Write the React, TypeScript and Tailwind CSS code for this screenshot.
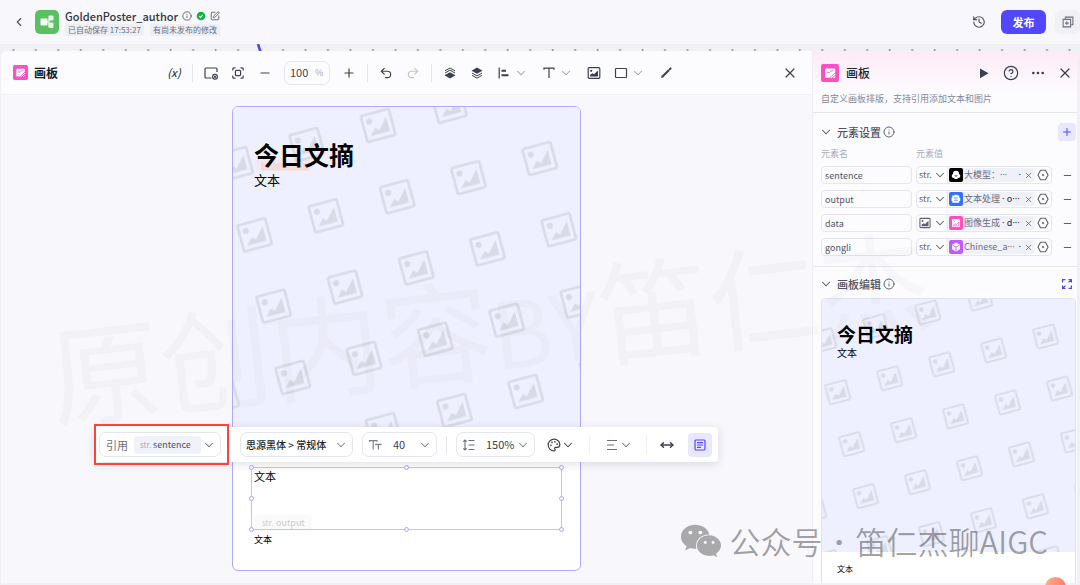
import React from "react";
import {
  ChevronDown,
  ChevronLeft,
  CircleHelp,
  Ellipsis,
  History,
  Info,
  Minus,
  MoveHorizontal,
  Palette,
  Plus,
  Redo2,
  SquarePen,
  Undo2,
  X,
} from "lucide-react";
import { FaWeixin } from "react-icons/fa";

type IconProps = { className?: string };

function FlowLogo({ className }: IconProps) {
  return (
    <svg viewBox="0 0 24 24" className={className} aria-hidden="true">
      <rect width="24" height="24" rx="5" fill="#5bc160" />
      <path d="M10 12h4V8.5h2M14 12v4h2" fill="none" stroke="#fff" strokeOpacity=".75" strokeWidth="1.4" />
      <rect x="5.5" y="8.5" width="7" height="7" rx="1.2" fill="#fff" />
      <rect x="13.5" y="5.5" width="5" height="5" rx="1" fill="#e3f5e4" />
      <rect x="13.5" y="12.5" width="5" height="5.5" rx="1" fill="#e3f5e4" />
    </svg>
  );
}

function BoardLogo({ className }: IconProps) {
  return (
    <svg viewBox="0 0 18 18" className={className} aria-hidden="true">
      <rect width="18" height="18" rx="2" fill="#ff4fc3" />
      <path d="M5 4.5h8.2a1 1 0 0 1 1 1v2.7L8.6 13.8H5a1 1 0 0 1-1-1V5.5a1 1 0 0 1 1-1z" fill="#fff" />
      <path d="M5.5 9.2c1.6-2.6 2.4.6 3.8-1.2.9-1.2 1.6-1.6 2.8-1" fill="none" stroke="#ff4fc3" strokeWidth="1" />
      <path d="M10 14l4.2-4.2M12.6 14l1.6-1.6" stroke="#fff" strokeWidth="1.2" />
    </svg>
  );
}

function PictureIcon({ className }: IconProps) {
  return (
    <svg viewBox="0 0 16 16" className={className} aria-hidden="true">
      <rect x="2.2" y="2.7" width="11.6" height="10.6" rx="1" fill="none" stroke="currentColor" strokeWidth="1.2" />
      <circle cx="5.2" cy="5.8" r="1.1" fill="currentColor" />
      <path d="M4 11.6V10l2.4-1.8 1.6 1L12 5.4v6.2z" fill="currentColor" />
    </svg>
  );
}

function SizeIcon({ className }: IconProps) {
  return (
    <svg viewBox="0 0 16 16" className={className} fill="none" stroke="currentColor" strokeWidth="1.2" aria-hidden="true">
      <path d="M8.5 13H3a1 1 0 0 1-1-1V4a1 1 0 0 1 1-1h10a1 1 0 0 1 1 1v3" />
      <circle cx="12" cy="11.8" r="2.4" />
      <circle cx="12" cy="11.8" r=".5" fill="currentColor" />
    </svg>
  );
}

function FitIcon({ className }: IconProps) {
  return (
    <svg viewBox="0 0 16 16" className={className} fill="none" stroke="currentColor" strokeWidth="1.2" aria-hidden="true">
      <path d="M5.5 2.8H3.8a1 1 0 0 0-1 1v1.7M10.5 2.8h1.7a1 1 0 0 1 1 1v1.7M5.5 13.2H3.8a1 1 0 0 1-1-1v-1.7M10.5 13.2h1.7a1 1 0 0 0 1-1v-1.7" />
      <rect x="5.4" y="5.4" width="5.2" height="5.2" rx="1" />
    </svg>
  );
}

function LayersIcon({ className, filled }: IconProps & { filled: "top" | "bottom" }) {
  return filled === "bottom" ? (
    <svg viewBox="0 0 16 16" className={className} aria-hidden="true">
      <path d="M3 5.8L8 3l5 2.8M3 8L8 5.2 13 8" fill="none" stroke="currentColor" strokeWidth="1" />
      <path d="M2.5 10.3L8 7.2l5.5 3.1L8 13.6z" fill="currentColor" />
    </svg>
  ) : (
    <svg viewBox="0 0 16 16" className={className} aria-hidden="true">
      <path d="M2.5 5.7L8 2.4l5.5 3.3L8 8.8z" fill="currentColor" />
      <path d="M3 8l5 2.9L13 8M3 10.3l5 2.9 5-2.9" fill="none" stroke="currentColor" strokeWidth="1" />
    </svg>
  );
}

function AlignEdgeIcon({ className }: IconProps) {
  return (
    <svg viewBox="0 0 16 16" className={className} aria-hidden="true">
      <path d="M3.2 2.5v11" stroke="currentColor" strokeWidth="1.2" />
      <path d="M5.5 5.8h4.500M5.5 10.2h7" stroke="currentColor" strokeWidth="2" />
    </svg>
  );
}

function TextIcon({ className }: IconProps) {
  return (
    <svg viewBox="0 0 16 16" className={className} fill="none" stroke="currentColor" strokeWidth="1.2" aria-hidden="true">
      <path d="M3 4.8V3.2h10v1.6M8 3.2V13" />
    </svg>
  );
}

function PenIcon({ className }: IconProps) {
  return (
    <svg viewBox="0 0 16 16" className={className} aria-hidden="true">
      <path d="M4.3 11.7L11 5" stroke="currentColor" strokeWidth="2" />
      <path d="M3 13l.8-2.4 1.6 1.6z" fill="currentColor" />
      <path d="M11.8 4.2l.8-.8" stroke="currentColor" strokeWidth="2" strokeLinecap="round" />
    </svg>
  );
}

function FontSizeIcon({ className }: IconProps) {
  return (
    <svg viewBox="0 0 16 16" className={className} fill="none" stroke="currentColor" strokeWidth="1.2" aria-hidden="true">
      <path d="M2.5 4.8V3.6H10v1.2M6.2 3.6v9M8.8 8.2v-.8H14v.8M11.4 7.4v5.2" />
    </svg>
  );
}

function LineHeightIcon({ className }: IconProps) {
  return (
    <svg viewBox="0 0 16 16" className={className} fill="none" stroke="currentColor" strokeWidth="1.1" aria-hidden="true">
      <path d="M4 3v10M2.300 4.700L4 3l1.700 1.700M2.300 11.300L4 13l1.700-1.700M7.500 3.500h6M7.500 8h6M7.500 12.500h6" />
    </svg>
  );
}

function HexIcon({ className }: IconProps) {
  return (
    <svg viewBox="0 0 16 16" className={className} fill="none" stroke="currentColor" strokeWidth="1.3" aria-hidden="true">
      <path d="M5.200 2.600h5.600L13.800 8l-3 5.400H5.200L2.200 8z" strokeLinejoin="round" />
      <circle cx="8" cy="8" r="1.200" fill="currentColor" stroke="none" />
    </svg>
  );
}

function ExpandIcon({ className }: IconProps) {
  return (
    <svg viewBox="0 0 12 12" className={className} fill="none" stroke="currentColor" strokeWidth="1.200" aria-hidden="true">
      <path d="M4.500 1.600H1.600v2.900M7.500 1.600h2.900v2.900M4.500 10.400H1.600V7.500M7.500 10.400h2.900V7.500M10.200 1.800L7.600 4.400M1.800 10.200l2.600-2.600" />
    </svg>
  );
}

function Chevron({ className = "" }: IconProps) {
  return <ChevronDown strokeWidth={1.8} className={`size-[14px] shrink-0 ${className}`} />;
}

/* Repeating tilted picture glyphs that stand in for an image still to be bound. */
function ImagePlaceholder({ id }: { id: string }) {
  return (
    <svg viewBox="0 0 348 348" className="block w-full bg-[#eff0ff]" role="img" aria-label="图片">
      <defs>
        <pattern id={id} width="74" height="74" patternUnits="userSpaceOnUse" patternTransform="translate(145.5 18.5) rotate(-15) translate(-37 -37)">
          <g transform="translate(37 37)">
            <rect x="-14.5" y="-13.5" width="29" height="27" rx="1.500" fill="none" stroke="#d8dae6" strokeWidth="2.600" />
            <circle cx="-7.700" cy="-6.200" r="3.100" fill="#d8dae6" />
            <path d="M-10 8.500L-3.500 1.500 0 5 10-6.500v15z" fill="#d8dae6" />
          </g>
        </pattern>
      </defs>
      <rect width="348" height="348" fill={`url(#${id})`} />
    </svg>
  );
}

function IconButton({ label, className = "", children }: { label: string; className?: string; children: React.ReactNode }) {
  return (
    <button type="button" aria-label={label} className={`flex shrink-0 items-center justify-center ${className}`}>
      {children}
    </button>
  );
}

function MenuButton({ label, children }: { label: string; children: React.ReactNode }) {
  return (
    <button type="button" aria-label={label} aria-haspopup="menu" className="mr-[2px] flex shrink-0 items-center gap-[2px]">
      {children}
      <Chevron className="text-[#9a9cab]" />
    </button>
  );
}

function Header() {
  return (
    <header className="flex h-11 shrink-0 items-center overflow-hidden bg-[#f7f7fc]">
      <IconButton label="返回" className="ml-3 size-[14px] text-[#50535f]">
        <ChevronLeft className="size-[14px]" />
      </IconButton>
      <FlowLogo className="ml-[9px] size-6 shrink-0" />
      <div className="ml-[6px] flex flex-col gap-px">
        <div className="flex h-[14px] items-center gap-1">
          <h1 className="text-[11px] leading-[14px] font-medium text-[#33353f]">GoldenPoster_author</h1>
          <Info className="size-[10px] text-[#50535f]" />
          <svg viewBox="0 0 10 10" className="size-[10px]" aria-label="已发布">
            <circle cx="5" cy="5" r="4.300" fill="#0eb544" />
            <path d="M3.200 5.100l1.300 1.300 2.400-2.500" fill="none" stroke="#fff" strokeWidth="1.100" />
          </svg>
          <SquarePen className="size-[10px] text-[#50535f]" />
        </div>
        <div className="flex gap-[6px] text-[8px] leading-3 text-[#6b6e7b]">
          <span className="rounded-xs bg-[#edeef6] px-[3px]">已自动保存 17:53:27</span>
          <span className="rounded-xs bg-[#edeef6] px-[3px]">有尚未发布的修改</span>
        </div>
      </div>
      <IconButton label="历史" className="ml-auto size-4 text-[#50535f]">
        <History className="size-[14px]" />
      </IconButton>
      <button type="button" className="ml-[14px] h-6 w-[45px] rounded-md bg-[#5147ff] text-[11px] leading-4 font-bold text-white">
        发布
      </button>
      <IconButton label="创建副本" className="ml-[9px] h-6 w-[25px] rounded-md bg-[#f0f0f5] text-[#6b6e7b]">
        <svg viewBox="0 0 16 16" className="size-3" fill="none" stroke="currentColor" strokeWidth="1.400" aria-hidden="true">
          <path d="M4.500 3.500v-2h10v10h-2M1.500 4.500h10v10h-10zM6.500 7v5M4 9.500h5" />
        </svg>
      </IconButton>
    </header>
  );
}

function DottedStrip() {
  return (
    <div className="h-[7px] shrink-0 bg-[#f1f1f5]">
      <svg className="block h-full w-full" aria-hidden="true">
        <defs>
          <pattern id="dots" width="22.470" height="8" patternUnits="userSpaceOnUse" patternTransform="translate(2 0)">
            <circle cx="11.400" cy="6" r="1" fill="#8b8d98" />
          </pattern>
        </defs>
        <rect width="100%" height="100%" fill="url(#dots)" />
        <path d="M258 0l2.500 8" stroke="#4d48f0" strokeWidth="2.600" />
      </svg>
    </div>
  );
}

function Divider() {
  return <span className="mx-[10px] h-[18px] w-px shrink-0 bg-[#e4e5ef]" />;
}

function CanvasToolbar() {
  return (
    <div className="flex h-[44px] shrink-0 items-center border-b border-[#f0f0f6] bg-[#fcfcff] pr-[14px] pl-3 text-[#3c3f4d]">
      <BoardLogo className="size-[15px] shrink-0" />
      <h2 className="ml-[6px] w-[132px] text-[12px] font-bold text-[#15171e]">画板</h2>
      <button type="button" aria-label="变量" className="w-4 text-center text-[11px] font-medium italic">
        <span className="-mx-1">(x)</span>
      </button>
      <Divider />
      <div className="flex items-center gap-[11px]">
        <IconButton label="画布尺寸"><SizeIcon className="size-4" /></IconButton>
        <IconButton label="适应画布"><FitIcon className="size-4" /></IconButton>
        <IconButton label="缩小" className="size-4"><Minus className="size-[14px]" /></IconButton>
        <label className="flex h-6 w-[46px] items-center rounded-[7px] border border-[#e4e5ef] px-[5px] text-[11px]">
          <input aria-label="缩放比例" defaultValue="100" className="w-6 min-w-0 bg-transparent outline-none" />
          <span className="ml-px text-[9px] text-[#a9abb8]">%</span>
        </label>
        <IconButton label="放大" className="size-4"><Plus className="size-[14px]" /></IconButton>
      </div>
      <Divider />
      <div className="flex items-center gap-[11px]">
        <IconButton label="撤销" className="size-4"><Undo2 className="size-[14px]" /></IconButton>
        <IconButton label="重做" className="size-4 text-[#c3c5d0]"><Redo2 className="size-[14px]" /></IconButton>
      </div>
      <Divider />
      <div className="flex items-center gap-[11px]">
        <IconButton label="置底"><LayersIcon filled="bottom" className="size-4" /></IconButton>
        <IconButton label="置顶"><LayersIcon filled="top" className="size-4" /></IconButton>
        <MenuButton label="对齐"><AlignEdgeIcon className="size-4" /></MenuButton>
        <MenuButton label="文本"><TextIcon className="size-4" /></MenuButton>
        <IconButton label="图片"><PictureIcon className="size-4" /></IconButton>
        <MenuButton label="形状">
          <svg viewBox="0 0 16 16" className="size-4" aria-hidden="true">
            <rect x="2.500" y="3.500" width="11" height="9" rx=".8" fill="none" stroke="currentColor" strokeWidth="1.200" />
          </svg>
        </MenuButton>
        <IconButton label="画笔"><PenIcon className="size-4" /></IconButton>
      </div>
      <IconButton label="关闭" className="ml-auto size-4"><X strokeWidth={1.800} className="size-4" /></IconButton>
    </div>
  );
}

function FormatSelect({ label, value, icon, className, textClass }: { label: string; value: string; icon?: React.ReactNode; className: string; textClass: string }) {
  return (
    <label className={`relative flex h-[25px] shrink-0 items-center rounded-[7px] border border-[#e4e5ef] ${className}`}>
      {icon}
      <select aria-label={label} defaultValue={value} className={`h-full w-full appearance-none bg-transparent outline-none ${textClass}`}>
        <option>{value}</option>
      </select>
      <Chevron className="pointer-events-none absolute right-1 text-[#7b7e8c]" />
    </label>
  );
}

function TextToolbar() {
  return (
    <div className="absolute top-[321px] left-[-137px] z-10 flex h-[35px] w-[623px] items-center rounded-sm bg-white pr-[6px] pl-1 text-[#3c3f4d] shadow-[0_2px_10px_rgba(30,30,60,0.14)]">
      <div className="relative flex h-[25px] w-[122px] shrink-0 items-center rounded-[7px] border border-[#e4e5ef] pl-[6px] text-[#6b6e7b]">
        <label htmlFor="reference" className="text-[11px] leading-4">引用</label>
        <span className="ml-[6px] flex h-[18px] w-[67px] items-center rounded-sm bg-[#f1f2f9] pl-[6px]">
          <span className="w-[13px] text-[8px] leading-3 text-[#a9abb8]">str.</span>
          <select id="reference" defaultValue="sentence" className="w-11 appearance-none bg-transparent text-[9px] leading-3 text-[#50535f] outline-none">
            <option>sentence</option>
          </select>
        </span>
        <Chevron className="pointer-events-none absolute right-1" />
      </div>
      <span className="ml-2 h-[18px] w-px bg-[#f0f0f6]" />
      <FormatSelect label="字体" value="思源黑体 > 常规体" className="ml-[10px] w-[113px]" textClass="pl-[5px] text-[10px] font-medium text-[#22242d]" />
      <FormatSelect label="字号" value="40" icon={<FontSizeIcon className="ml-1 size-4 shrink-0 text-[#7b7e8c]" />} className="ml-[9px] w-[75px]" textClass="pl-[10px] text-[11px]" />
      <span className="mx-[9px] h-[18px] w-px bg-[#e4e5ef]" />
      <FormatSelect label="行高" value="150%" icon={<LineHeightIcon className="ml-1 size-4 shrink-0 text-[#6b6e7b]" />} className="w-[79px]" textClass="pl-[9px] text-[11px]" />
      <button type="button" aria-label="颜色" className="ml-3 flex items-center">
        <Palette className="size-[14px]" />
        <Chevron />
      </button>
      <span className="ml-[14px] mr-4 h-[18px] w-px bg-[#f0f0f6]" />
      <button type="button" aria-label="文本对齐" className="flex items-center gap-px text-[#6b6e7b]">
        <svg viewBox="0 0 12 12" className="size-3" stroke="currentColor" strokeWidth="1.200" aria-hidden="true">
          <path d="M1 1.500h10M1 6h7M1 10.500h10" />
        </svg>
        <Chevron />
      </button>
      <span className="mx-[13px] h-[18px] w-px bg-[#f0f0f6]" />
      <IconButton label="宽度模式"><MoveHorizontal strokeWidth={2.500} className="size-[14px]" /></IconButton>
      <IconButton label="多行文本" className="ml-auto size-6 rounded-sm bg-[#e7e8ff] text-[#5147ff]">
        <svg viewBox="0 0 12 12" className="size-3" fill="none" stroke="currentColor" strokeWidth="1.200" aria-hidden="true">
          <rect x="1" y="1" width="10" height="10" rx="1" />
          <path d="M3 3.700h6M3 6h6M3 8.300h4" />
        </svg>
      </IconButton>
    </div>
  );
}

function SelectionFrame() {
  const dot = "size-[5px] rounded-full border border-[#a9a6ff] bg-white";
  return (
    <div className="absolute top-[359px] left-[17px] grid h-[67px] w-[315px] grid-cols-3 grid-rows-3 items-center justify-items-center">
      <div className="absolute inset-[2px] border border-[#c3c4f6]" />
      <i className={`relative self-start justify-self-start ${dot}`} />
      <i className={`relative self-start ${dot}`} />
      <i className={`relative self-start justify-self-end ${dot}`} />
      <i className={`relative col-start-1 justify-self-start ${dot}`} />
      <i className={`relative col-start-3 justify-self-end ${dot}`} />
      <i className={`relative col-start-1 self-end justify-self-start ${dot}`} />
      <i className={`relative self-end ${dot}`} />
      <i className={`relative self-end justify-self-end ${dot}`} />
    </div>
  );
}

function Stage() {
  return (
    <div className="flex min-h-0 flex-1 justify-center bg-[#f7f7fc] pt-[11px]">
      <div className="relative h-[465px] w-[349px] shrink-0">
        <div className="h-full overflow-hidden rounded-md border border-[#aeabff] bg-white">
          <ImagePlaceholder id="placeholder-main" />
        </div>
        <span className="absolute top-[53px] left-[23px] h-[11px] w-[58px] rounded-sm bg-[#ffb27a]/10" />
        <span className="absolute top-[57px] left-[29px] h-2 w-12 bg-[#ff9a4d]/15" />
        <p className="absolute top-[33px] left-[22px] text-[25px] leading-[30px] font-bold text-black">今日文摘</p>
        <p className="absolute top-[64px] left-[22px] text-[13px] leading-5 text-black">文本</p>
        <p className="absolute top-[361px] left-[22px] text-[11px] leading-[18px] text-black">文本</p>
        <p className="absolute top-[409px] left-[22px] flex h-4 w-[58px] items-center rounded-sm bg-[#fafafb] pl-2 text-[9px] leading-3 text-[#c9cad0]">
          <span className="w-[14px] text-[8px]">str.</span>output
        </p>
        <p className="absolute top-[426px] left-[22px] text-[9px] leading-4 text-black">文本</p>
        <SelectionFrame />
        <TextToolbar />
        <div className="pointer-events-none absolute top-[318px] left-[-138px] z-20 h-[41px] w-[135px] border-2 border-[#fa4537]" />
      </div>
    </div>
  );
}

type Row = { name: string; picture?: boolean; source: string; more?: string; field: string; tail?: boolean; badge: string; icon: React.ReactNode };

const rows: Row[] = [
  {
    name: "sentence",
    source: "大模型：",
    more: "···",
    field: "·",
    tail: true,
    badge: "bg-black",
    icon: (
      <>
        <circle cx="7" cy="5.800" r="3" fill="#fff" />
        <circle cx="4.600" cy="8" r="1.900" fill="#fff" />
        <circle cx="9.400" cy="8" r="1.900" fill="#fff" />
        <path d="M5 8.200h4L8.500 11h-3z" fill="#fff" />
        <path d="M5.600 7.600q1.400 1 2.800 0" stroke="#000" strokeWidth=".7" fill="none" />
      </>
    ),
  },
  {
    name: "output",
    source: "文本处理",
    field: "· o···",
    badge: "bg-[#3370ff]",
    icon: (
      <>
        <path d="M3.300 3.500h2.400V2.700h2.600v.8h1.900v2.300h1v3.200h-1v1.800H3.300V9h-.8V5.800h.8z" fill="#fff" />
        <path d="M5 5.900h3.800M5 8.200h3.800" stroke="#3370ff" strokeWidth=".8" />
      </>
    ),
  },
  {
    name: "data",
    picture: true,
    source: "图像生成",
    field: "· d···",
    badge: "bg-[#ff4fc3]",
    icon: (
      <>
        <rect x="3" y="3" width="8" height="8" rx=".8" fill="#fff" />
        <path d="M4 9.800l2-2 1.200.9L9.800 6v3.800zM4.400 4.300l1.400 1.400" stroke="#ff4fc3" strokeWidth=".7" fill="none" />
      </>
    ),
  },
  {
    name: "gongli",
    source: "Chinese_a",
    more: "···",
    field: "·",
    tail: true,
    badge: "bg-[#c05cff]",
    icon: (
      <>
        <path d="M7 2.600l3.900 2.200v4.400L7 11.400 3.100 9.200V4.800z" fill="#fff" />
        <path d="M3.600 5.200L7 7.100l3.400-1.900M7 7.100v3.800" stroke="#c05cff" strokeWidth=".9" fill="none" />
      </>
    ),
  },
];

function ElementTable() {
  return (
    <table className="mt-[7px] w-full table-fixed border-collapse text-left">
      <thead>
        <tr className="h-3 text-[9px] leading-3 text-[#a9abb8]">
          <th className="w-[95px] font-normal">元素名</th>
          <th className="font-normal">元素值</th>
          <th className="w-[25px]" aria-label="操作" />
        </tr>
      </thead>
      <tbody>
        {rows.map((row) => (
          <tr key={row.name} className="h-6">
            <td className="pr-1 align-bottom">
              <input
                aria-label="元素名"
                defaultValue={row.name}
                className="block h-[18px] w-full rounded-sm border border-[#e4e5ef] bg-transparent px-[3px] text-[9px] leading-4 text-[#50535f] outline-none"
              />
            </td>
            <td className="align-bottom">
              <div className="flex h-[18px] items-center rounded-sm border border-[#e4e5ef] text-[9px] leading-4 text-[#5f626f]">
                {row.picture ? (
                  <button type="button" aria-label="类型" aria-haspopup="listbox" className="flex w-[30px] shrink-0 items-center justify-between pl-px">
                    <PictureIcon className="size-[14px]" />
                    <Chevron />
                  </button>
                ) : (
                  <label className="relative flex w-[30px] shrink-0 items-center">
                    <select aria-label="类型" defaultValue="str." className="w-full appearance-none bg-transparent pl-[2px] outline-none">
                      <option>str.</option>
                    </select>
                    <Chevron className="pointer-events-none absolute right-0" />
                  </label>
                )}
                <span className="h-full w-px shrink-0 bg-[#e4e5ef]" />
                <span className="ml-px flex h-[14px] min-w-0 flex-1 items-center rounded-xs bg-[#f0f0f8]">
                  <svg viewBox="0 0 14 14" className={`size-[14px] shrink-0 rounded-xs ${row.badge}`} aria-hidden="true">
                    {row.icon}
                  </svg>
                  <span className="ml-px flex min-w-0 flex-1 items-center whitespace-pre text-[#6b6e7b]">
                    {row.source}
                    {row.more && <span className="font-['Noto_Sans']">{row.more}</span>}
                    <span className={`font-['Noto_Sans'] font-medium text-[#3c3f4d] ${row.tail ? "mr-[3px] ml-auto" : "ml-[2px]"}`}>{row.field}</span>
                  </span>
                  <button type="button" aria-label="移除" className="mr-[2px] shrink-0">
                    <X className="size-[9px]" />
                  </button>
                </span>
                <IconButton label="设置" className="mx-px"><HexIcon className="size-[14px]" /></IconButton>
              </div>
            </td>
            <td className="align-bottom">
              <IconButton label="删除" className="ml-auto h-[18px] w-5 text-[#50535f]"><Minus className="size-[11px]" /></IconButton>
            </td>
          </tr>
        ))}
      </tbody>
    </table>
  );
}

function SectionTitle({ children }: { children: React.ReactNode }) {
  return (
    <h3 className="flex items-center text-[11px] leading-4 font-medium text-[#50535f]">
      <Chevron className="-ml-[2px]" />
      <span className="mr-[2px] ml-1">{children}</span>
      <Info strokeWidth={1.800} className="size-3" />
    </h3>
  );
}

function SidePanel() {
  return (
    <aside className="flex w-[265px] shrink-0 flex-col overflow-hidden border-l border-[#eeeef5] bg-[#fcfcff]">
      <div className="border-b border-[#e4e5ef] bg-linear-to-b from-[#fdeaf6] to-[#fcfcff] to-70% pt-[13px] pr-1 pb-[6px] pl-2">
        <div className="flex h-[18px] items-center text-[#3c3f4d]">
          <BoardLogo className="size-[18px]" />
          <h2 className="ml-[7px] text-[12px] font-medium text-[#22242d]">画板</h2>
          <div className="ml-auto flex gap-[11px]">
            <IconButton label="运行" className="size-4">
              <svg viewBox="0 0 14 14" className="size-4" aria-hidden="true"><path d="M3.500 3v8.500L11 7.300z" fill="currentColor" /></svg>
            </IconButton>
            <IconButton label="帮助"><CircleHelp className="size-4" strokeWidth={1.800} /></IconButton>
            <IconButton label="更多"><Ellipsis className="size-4" /></IconButton>
            <IconButton label="关闭" className="size-4"><X strokeWidth={1.800} className="size-4" /></IconButton>
          </div>
        </div>
        <p className="mt-[10px] text-[9px] leading-[14px] text-[#85889a]">自定义画板排版，支持引用添加文本和图片</p>
      </div>
      <section className="border-b border-[#e4e5ef] pt-[10px] pb-[10px] pl-2">
        <div className="flex h-[18px] items-center justify-between pr-px">
          <SectionTitle>元素设置</SectionTitle>
          <IconButton label="添加元素" className="size-[18px] rounded-sm bg-[#e7e8ff] text-[#5147ff]"><Plus className="size-3" /></IconButton>
        </div>
        <ElementTable />
      </section>
      <section className="min-h-0 flex-1 pt-2 pr-px pl-2">
        <div className="flex h-[18px] items-center justify-between pr-[3px]">
          <SectionTitle>画板编辑</SectionTitle>
          <IconButton label="展开" className="text-[#5147ff]"><ExpandIcon className="size-3" /></IconButton>
        </div>
        <div className="relative mt-[5px] h-[340px] overflow-hidden rounded-t-sm border border-[#e0e1ef] bg-white">
          <ImagePlaceholder id="placeholder-preview" />
          <p className="absolute top-[24px] left-[15px] text-[19px] leading-[22px] font-bold text-black">今日文摘</p>
          <p className="absolute top-[47px] left-[15px] text-[10px] leading-[14px] text-black">文本</p>
          <p className="absolute top-[263px] left-[15px] text-[8px] leading-[14px] text-black">文本</p>
        </div>
      </section>
    </aside>
  );
}

export default function App() {
  return (
    <div className="relative flex h-screen min-h-[560px] flex-col overflow-hidden bg-[#f1f1f5] font-['Noto_Sans_CJK_SC',sans-serif]">
      <Header />
      <DottedStrip />
      <div className="mr-[3px] mb-[2px] ml-px flex min-h-0 flex-1">
        <main className="flex min-w-0 flex-1 flex-col overflow-hidden rounded-tl-md">
          <CanvasToolbar />
          <Stage />
        </main>
        <SidePanel />
      </div>

      <div className="pointer-events-none absolute top-[243px] left-[47px] -rotate-[6.5deg] text-[111px] leading-[160px] font-normal whitespace-nowrap text-[#50401f]/3">
        原创内容<span className="text-[92px]">BY</span>笛仁杰
      </div>
      <div className="pointer-events-none absolute right-[32px] bottom-[23px] flex items-center text-[31px] leading-10 font-[350] text-[#303034]/45">
        <FaWeixin className="mr-[8px] size-[42px] text-[#a9a9ab]" />
        <span>公众号</span>
        <span className="w-[33px] text-center font-['Noto_Sans'] font-bold">·</span>
        <span>笛仁杰聊AIGC</span>
      </div>
      <span className="absolute right-[14px] bottom-[-13px] size-[21px] rounded-full bg-linear-to-r from-[#ffab90] to-[#ff7c6b]" />
    </div>
  );
}
